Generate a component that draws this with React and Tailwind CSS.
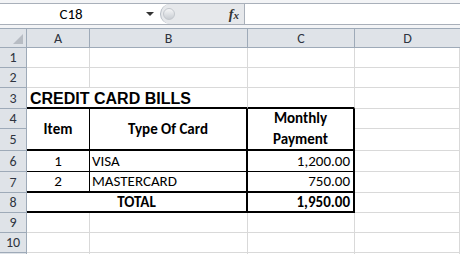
import React from "react";

const font = { fontFamily: "Carlito, Lato, 'Liberation Sans', sans-serif" };

const rowHeights = [20, 20, 21, 20, 22, 21, 21, 20, 20, 20, 20];

// grid cell helper: gray gridlines by default
function Cell({ className = "", style, children }) {
  return (
    <div
      className={`box-border flex items-center overflow-visible whitespace-nowrap text-[15px] text-black ${className}`}
      style={style}
    >
      {children}
    </div>
  );
}

function HeaderCell({ children, className = "" }) {
  return (
    <div className={`box-border flex items-center justify-center border-r border-b border-[#9eaab8] bg-[#dfe3e8] text-[14px] text-[#2e3440] ${className}`}>
      {children}
    </div>
  );
}

const g = "border-r border-b border-[#d9d9d9]";

export default function App() {
  return (
    <div className="h-[254px] w-[460px] overflow-hidden bg-white" style={font}>
      {/* formula bar */}
      <div className="flex h-[28px] flex-col bg-[#f3f4f6] pt-[3px]">
        <div className="flex h-[22px] items-stretch border-t border-b border-[#a9b0ba] bg-white">
          <div className="relative flex w-[160px] items-center justify-center pr-[16px] text-[15px] text-black">
            <span className="ml-[-2px]">C18</span>
            <span className="absolute right-[6px] top-[8px] h-0 w-0 border-x-[4px] border-t-[4px] border-x-transparent border-t-[#333]" />
          </div>
          <div className="flex w-[84px] items-center rounded-l-full border-l border-[#b4bac3] bg-[#e6e8eb] pl-[2px]">
            <div className="h-[12px] w-[12px] rounded-full border border-[#c3c7cd] bg-gradient-to-b from-[#f5f6f7] to-[#c9cdd3]" />
            <span
              className="ml-auto mr-[5px] text-[14px] font-bold italic text-[#333]"
              style={{ fontFamily: "'Liberation Serif', serif" }}
            >
              f<span className="text-[11px]">x</span>
            </span>
          </div>
          <div className="flex-1 border-l border-[#a9b0ba] bg-white" />
        </div>
      </div>

      {/* sheet grid */}
      <div
        className="grid border-t border-[#9eaab8]"
        style={{
          gridTemplateColumns: "27px 63px 158px 107px 1fr",
          gridTemplateRows: `19px ${rowHeights.map((h) => h + "px").join(" ")}`,
        }}
      >
        {/* column headers */}
        <HeaderCell className="relative">
          <span className="absolute bottom-[3px] right-[3px] h-0 w-0 border-b-[10px] border-l-[10px] border-b-[#b7bcc3] border-l-transparent" />
        </HeaderCell>
        <HeaderCell>A</HeaderCell>
        <HeaderCell>B</HeaderCell>
        <HeaderCell>C</HeaderCell>
        <HeaderCell className="border-r-0">D</HeaderCell>

        {/* row 1 */}
        <HeaderCell>1</HeaderCell>
        <Cell className={g} />
        <Cell className={g} />
        <Cell className={g} />
        <Cell className={g} />

        {/* row 2 */}
        <HeaderCell>2</HeaderCell>
        <Cell className={g} />
        <Cell className={g} />
        <Cell className={g} />
        <Cell className={g} />

        {/* row 3 title */}
        <HeaderCell>3</HeaderCell>
        <Cell
          className="col-span-2 border-b-2 border-r border-b-black border-r-[#d9d9d9] pl-[3px] pt-[2px] text-[16px] font-bold"
          style={{ fontFamily: "'Liberation Sans', Arial, sans-serif" }}
        >
          CREDIT CARD BILLS
        </Cell>
        <Cell className="border-b-2 border-r border-b-black border-r-[#d9d9d9]" />
        <Cell className={g} />

        {/* rows 4-5 header */}
        <HeaderCell>4</HeaderCell>
        <Cell className="row-span-2 justify-center border-r border-b-2 border-black font-bold">Item</Cell>
        <Cell className="row-span-2 justify-center border-r-2 border-b-2 border-black font-bold">Type Of Card</Cell>
        <Cell className="row-span-2 flex-col justify-center border-r-2 border-b-2 border-black text-center font-bold leading-[21px]">
          <span>Monthly</span>
          <span>Payment</span>
        </Cell>
        <Cell className={g} />
        <HeaderCell>5</HeaderCell>
        <Cell className={g} />

        {/* row 6 */}
        <HeaderCell>6</HeaderCell>
        <Cell className="justify-center border-r border-b border-black">1</Cell>
        <Cell className="border-r-2 border-b border-black pl-[2px]">VISA</Cell>
        <Cell className="justify-end border-r-2 border-b border-black pr-[3px]">1,200.00</Cell>
        <Cell className={g} />

        {/* row 7 */}
        <HeaderCell>7</HeaderCell>
        <Cell className="justify-center border-r border-b-2 border-black">2</Cell>
        <Cell className="border-r-2 border-b-2 border-black pl-[2px]">MASTERCARD</Cell>
        <Cell className="justify-end border-r-2 border-b-2 border-black pr-[3px]">750.00</Cell>
        <Cell className={g} />

        {/* row 8 total */}
        <HeaderCell>8</HeaderCell>
        <Cell className="col-span-2 justify-center border-r-2 border-b-2 border-black font-bold">TOTAL</Cell>
        <Cell className="justify-end border-r-2 border-b-2 border-black pr-[3px] font-bold">1,950.00</Cell>
        <Cell className={g} />

        {/* rows 9-10 and the edge of row 11 */}
        {[9, 10, ""].map((n) => (
          <React.Fragment key={n || "last"}>
            <HeaderCell>{n}</HeaderCell>
            <Cell className={g} />
            <Cell className={g} />
            <Cell className={g} />
            <Cell className={g} />
          </React.Fragment>
        ))}
      </div>
    </div>
  );
}
